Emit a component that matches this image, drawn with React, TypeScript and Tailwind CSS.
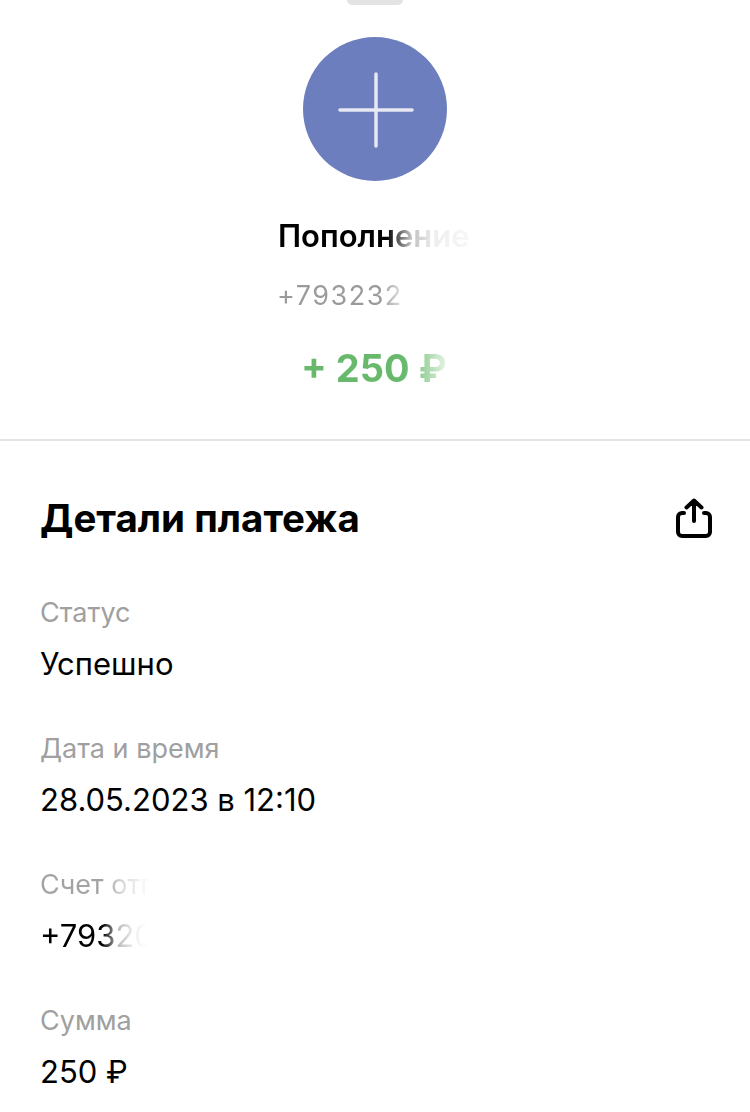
export default function App() {
  return (
    <div className="w-[750px] h-[1112px] overflow-hidden bg-white text-black font-['Inter','Noto_Sans',sans-serif]">
      <div className="flex flex-col items-center h-[441px] border-b-2 border-[#e4e4e4]">
        <div className="w-[56px] h-[5px] rounded-b-[5px] bg-[#e3e3e3]" />
        <div className="mt-[32px] w-[144px] h-[144px] rounded-full bg-[#6c7ebd] flex items-center justify-center">
          <svg width="80" height="80" viewBox="0 0 80 80" fill="none" className="ml-[1px] mt-[1px]">
            <path d="M40 4V76M4 40H76" stroke="#e6e8f3" strokeWidth="3.5" strokeLinecap="round" />
          </svg>
        </div>
        <div className="mt-[37px] h-[36px] leading-[36px] text-[31px] font-semibold w-[194px] whitespace-nowrap bg-[linear-gradient(90deg,#000_56%,#bbb_68%,#eee_80%,#f7f7f7_100%)] bg-clip-text text-transparent">
          Пополнение
        </div>
        <div className="mt-[25px] h-[34px] leading-[34px] text-[27px] tracking-[1.5px] w-[194px] -ml-[2px] whitespace-nowrap bg-[linear-gradient(90deg,#9a9a9a_54%,#eee_66%,#fff_72%)] bg-clip-text text-transparent">
          +793232
        </div>
        <div className="mt-[32px] mr-[4px] h-[46px] leading-[46px] text-[38px] font-bold w-[144px] whitespace-nowrap bg-[linear-gradient(90deg,#69b96c_72%,#a9d8ab_88%,#e4f2e4_100%)] bg-clip-text text-transparent">
          + 250 ₽
        </div>
      </div>
      <div className="px-[40px] pt-[53px]">
        <div className="flex items-center justify-between h-[48px]">
          <h2 className="text-[38.5px] font-bold leading-[48px]">Детали платежа</h2>
          <svg width="36" height="40" viewBox="0 0 36 40" fill="none" className="-mr-[2px] -mt-[1px]" stroke="#000" strokeWidth="4" strokeLinecap="round" strokeLinejoin="round">
            <path d="M18 23V2.5M10.5 9.5L18 2.5L25.5 9.5" />
            <path d="M8 15H6a4 4 0 0 0-4 4V34a4 4 0 0 0 4 4H30a4 4 0 0 0 4-4V19a4 4 0 0 0-4-4H28" />
          </svg>
        </div>
        <div className="mt-[53px] flex flex-col gap-[49px]">
          <Row label="Статус" value="Успешно" />
          <Row label="Дата и время" value="28.05.2023 в 12:10" />
          <div>
            <div className="h-[36px] leading-[36px] text-[27px] w-[130px] whitespace-nowrap bg-[linear-gradient(90deg,#a3a3a3_50%,#ddd_65%,#fff_85%)] bg-clip-text text-transparent">Счет отп</div>
            <div className="mt-[15px] h-[36px] leading-[36px] text-[31px] w-[120px] whitespace-nowrap bg-[linear-gradient(90deg,#000_52%,#bbb_65%,#eee_78%,#fff_90%)] bg-clip-text text-transparent">+79320</div>
          </div>
          <Row label="Сумма" value="250 ₽" />
        </div>
      </div>
    </div>
  );
}

function Row({ label, value }: { label: string; value: string }) {
  return (
    <div>
      <div className="h-[36px] leading-[36px] text-[27px] text-[#a0a0a0]">{label}</div>
      <div className="mt-[15px] h-[36px] leading-[36px] text-[31px] text-black">{value}</div>
    </div>
  );
}
